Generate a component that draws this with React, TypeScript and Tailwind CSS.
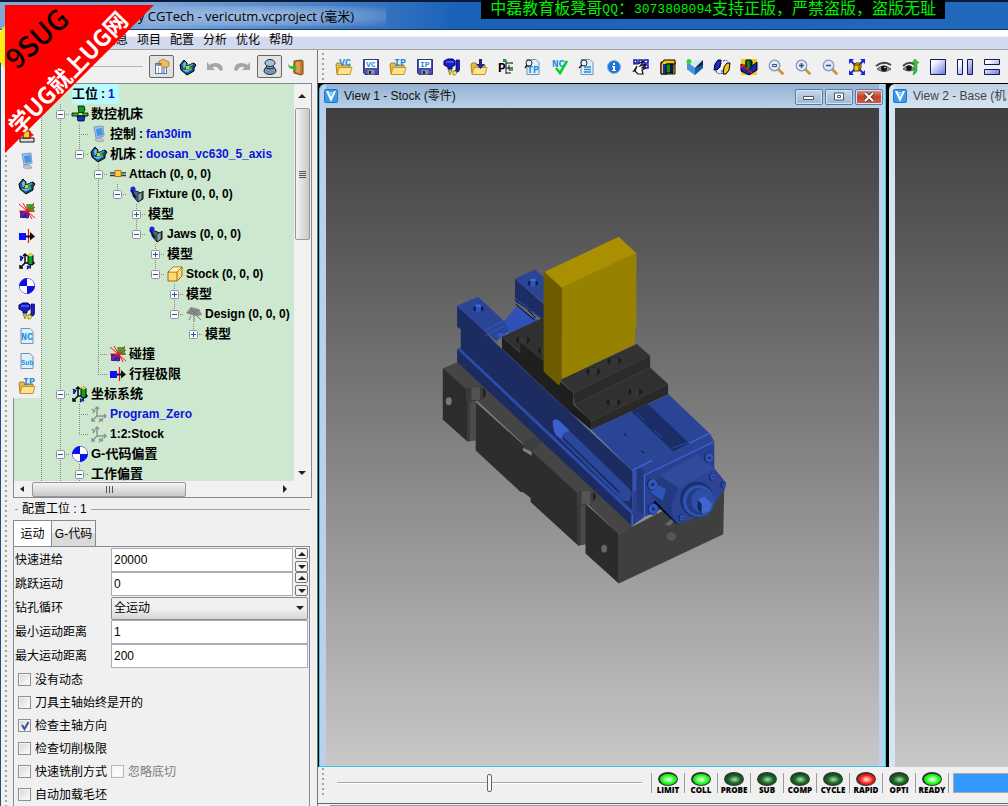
import { useState } from 'react';
import type { ReactNode } from 'react';

const folder = (
  <>
    <path d="M0 5.500 1 4h4l1 2h8v9H1z" fill="#e9b93c" stroke="#9a6d12" strokeWidth=".8" />
    <path d="M3 8.500h13l-2 7H1z" fill="#ffe38a" stroke="#b58420" strokeWidth=".8" />
  </>
);

const floppy = (
  <>
    <path d="M.5.500h15v15H2l-1.500-1.500z" fill="#4a4fae" stroke="#30347c" />
    <rect x="2" y="1" width="12" height="8" fill="#fff" />
    <rect x="4.500" y="11" width="7" height="4.500" fill="#8a90a8" />
    <rect x="6" y="12" width="2" height="3" fill="#222" />
  </>
);

const page = <path d="M2 .5h9l3 3v12H2z" fill="#dff0fd" stroke="#6f93b5" />;

const glyph = (text: string, x: number, y: number, size: number, fill = '#1b8fe0') => (
  <text x={x} y={y} fontSize={size} fontWeight="700" fill={fill} fontFamily="'Liberation Mono', monospace">
    {text}
  </text>
);

const lens = (
  <>
    <path d="m10 10 4.500 4.500" stroke="#c9963c" strokeWidth="2.800" strokeLinecap="round" />
    <circle cx="6.500" cy="6.500" r="5.300" fill="#dde8fb" stroke="#8494bb" strokeWidth="1.200" />
  </>
);

const axes = (color: string) => (
  <path
    d="M6 1v9h9M6 10l-5 5M4 3l2-2 2 2M13 8l2 2-2 2M1 12v3h3M1 3l2 2M2 7l2-3M8 13l4 2M12 12l-4 4"
    fill="none"
    stroke={color}
    strokeWidth="1.500"
  />
);

const icons: Record<string, ReactNode> = {
  properties: (
    <>
      <rect x="1.500" y="4.500" width="11" height="10" fill="#fff" stroke="#58769f" />
      <rect x="2" y="5" width="10" height="2" fill="#7aa5e0" />
      <path d="M4 9h1M7 9h4M4 11h1M7 11h4M4 13h1M7 13h4" stroke="#3d62b5" />
      <path d="M4 3 9 0l6 3v4l-4 2-3-2-4-1 4-1-3-1z" fill="#edbd62" stroke="#9a681d" strokeWidth=".7" />
    </>
  ),
  machine: (
    <>
      <path d="M0 6 4 1l3 3v3l7-3 2 2-2 3v3l-7 4-6-5z" fill="#1e5277" stroke="#000" />
      <path d="M3 5 5 3l1 3-2 3zM3 11l4 2 5-3" fill="#72bde8" stroke="#52b7ef" />
      <path d="M7 7 13 4l1 2-6 4z" fill="#4c9ac8" stroke="#000" strokeWidth=".5" />
      <path d="M6 7h3v3H6z" fill="#dccf1e" />
      <path d="M9 8h3v2H9z" fill="#0db426" />
    </>
  ),
  undo: <path d="M0 3v8h8L5.500 8.500Q10 6 13 12l3-1Q15 2 5 4.500L2.500 6z" fill="#a4a4a4" />,
  redo: <path d="M16 3v8H8l2.500-2.500Q6 6 3 12l-3-1Q1 2 11 4.500L13.500 6z" fill="#a4a4a4" />,
  stack: (
    <g fill="#7c96b4" stroke="#1d2c42" strokeWidth="1">
      <path d="M2 12q0-3 3-4h6q3 1 3 4 0 3-6 3.500-6-.5-6-3.500" />
      <path d="M5 6h6l1 3q-4 2-8 0z" />
      <ellipse cx="8" cy="4" rx="5" ry="3.500" fill="#a9bed6" />
    </g>
  ),
  exit: (
    <>
      <path d="m6 2 7-1 2 1v13l-2 1-7-2z" fill="#c07a2c" stroke="#7c4a12" />
      <path d="M8 3h4v11l-4-1z" fill="#dd9d4c" />
      <path d="M0 4q1 4 5 3V5l4 4-4 4v-3Q0 10 0 4" fill="#2fb52f" />
    </>
  ),
  openVc: <>{folder}{glyph('VC', 3, 7, 10)}</>,
  saveVc: <>{floppy}{glyph('VC', 3, 8, 8)}</>,
  openIp: <>{folder}{glyph('IP', 4, 7, 10)}</>,
  saveIp: <>{floppy}{glyph('IP', 3, 8, 8)}</>,
  tool: (
    <>
      <path d="M0 2 4 0h5l2 2v4L8 8v2H4V8L0 6z" fill="#171dc4" stroke="#00005c" />
      <path d="M2 3h8" stroke="#7a86ff" />
      <path d="M4 11h4l-2 5z" fill="#d9d23d" stroke="#5b5500" strokeWidth=".6" />
      <path d="M12 1h3.500v10L14 13H9l3-2z" fill="#171dc4" stroke="#00005c" strokeWidth=".7" />
      <path d="M9 12h3l1 2-2 2H9z" fill="#fff03a" stroke="#5b5500" strokeWidth=".6" />
    </>
  ),
  importFile: <>{folder}<path d="M8 0h3v5h3l-4.500 5L5 5h3z" fill="#15289a" /></>,
  tree: (
    <>
      {glyph('P', 0, 13, 13, '#000')}
      <path d="M8 1v14M8 4h5M8 9h5M8 14h5M11 6v5h4" stroke="#111" fill="none" />
      <path d="M5 0h3v3H5zM13 3h2v2h-2zM13 8h2v2h-2z" fill="#12a327" />
    </>
  ),
  toolPath: <>{page}{glyph('TP', 2, 14, 10)}<circle cx="4" cy="4" r="3" fill="#eef" stroke="#222" /><path d="m2 6-2 3" stroke="#222" strokeWidth="1.500" /></>,
  ncCheck: <>{glyph('NC', 0, 8, 11)}<path d="m4 9 4 5 7-12" fill="none" stroke="#00d420" strokeWidth="2.500" /></>,
  report: <>{page}<path d="M5 8h7M5 10.500h7M5 13h7" stroke="#278fdb" strokeWidth="1.500" /><circle cx="5" cy="4" r="3" fill="#eef" stroke="#222" /><path d="M3 6 0 9" stroke="#222" strokeWidth="1.500" /></>,
  info: (
    <>
      <circle cx="8" cy="8" r="6.500" fill="#1d76d2" stroke="#7eb3ea" />
      <path d="M7 4h2v2H7zM6 7h3v4h1v1H6v-1h1V8H6z" fill="#fff" />
    </>
  ),
  handGrid: (
    <>
      <path d="M1 1h3v3H1zM6 1h3v3H6zM11 1h4v3h-4zM12 6h3v3h-3zM7 6h3v3H7z" fill="#fff" stroke="#1515c8" strokeWidth="1.500" />
      <path d="m0 5 5 0 6-3-4 5 6-2-4 4 4 0-4 2 1 4H5l-3-3 2-5-4 6" fill="#fff" stroke="#111" strokeWidth="1.200" />
    </>
  ),
  blocks: (
    <>
      <path d="M1 3h14v12H1z" fill="#f1c410" stroke="#000" />
      <path d="M1 5 4 1h11v4H7v10H1z" fill="#f1c410" stroke="#000" />
      <path d="M3 5h3v10H3z" fill="#1826c4" />
      <path d="M6 5h5v9H6z" fill="#0b8e1d" stroke="#000" />
      <path d="M11 5h2v9h-2z" fill="#1826c4" stroke="#000" />
    </>
  ),
  compare: (
    <>
      <path d="m0 3 8 6 8-7v7l-8 7-8-6z" fill="#175da2" />
      <path d="m0 3 8 6v7l-8-6z" fill="#3e95d8" />
      <path d="m4 4 5 4 6-6-3-1H8z" fill="#d2e7f5" />
      <path d="m8 9 8-8v5z" fill="#0b2344" />
      <circle cx="2" cy="2.500" r="2.500" fill="#22dd36" />
    </>
  ),
  rotate: (
    <>
      <path d="m1 5 3-4h3L6 8l-3 3H0z" fill="#172acc" stroke="#000" />
      <path d="m10 8 3-4h3l-1 7-3 4H9z" fill="#f0c414" stroke="#000" />
      <path d="M9 2q5-2 5 2M2 12q1 4 6 2M7 1v4M8 11v4" fill="none" stroke="#1527d8" strokeDasharray="2 1" />
    </>
  ),
  cutPlane: (
    <>
      <path d="M0 0h16v16H0z" fill="#f5c819" />
      <path d="M0 5 5 8V2h6v5l5-4v8l-8 5-8-4z" fill="#1924c0" stroke="#000" />
      <path d="M5 1h5v8l-3 3-2-3z" fill="#087e24" stroke="#000" />
      <path d="m1 6 10 8M1 6l3 0M1 6v3" stroke="#f11" strokeWidth="1.500" />
    </>
  ),
  zoomBox: <>{lens}<path d="M4.500 5.500h4v2h-4z" fill="none" stroke="#35527d" /></>,
  zoomIn: <>{lens}<path d="M4 6.500h5M6.500 4v5" stroke="#35527d" strokeWidth="1.500" /></>,
  zoomOut: <>{lens}<path d="M4 6.500h5" stroke="#35527d" strokeWidth="1.500" /></>,
  fit: (
    <>
      <path d="m1 1 14 14M15 1 1 15" stroke="#1723df" strokeWidth="1.800" />
      <path d="M0 0h5L0 5zM16 0v5l-5-5zM0 16v-5l5 5zM16 16h-5l5-5z" fill="#1723df" />
      <path d="m5 6 2-2h5v5l-2 3H5z" fill="#f3c316" stroke="#493600" />
      <path d="M5 6h5v6M10 6l2-2" fill="none" stroke="#493600" />
    </>
  ),
  eye: (
    <>
      <path d="M0 7q7-6 15-1" fill="none" stroke="#444" strokeWidth="2" />
      <path d="M1 10q6-6 14 0-7 5-14 0" fill="#999" stroke="#555" />
      <circle cx="8" cy="9.500" r="3" fill="#111" />
      <circle cx="9" cy="8.500" r=".8" fill="#fff" />
    </>
  ),
  eyeRefresh: (
    <>
      <path d="M0 7q6-6 12-1" fill="none" stroke="#444" strokeWidth="2" />
      <path d="M0 10q5-6 12 0-6 4-12 0" fill="#999" stroke="#555" />
      <circle cx="6" cy="9" r="2.800" fill="#111" />
      <path d="m12 0 4 4h-2v7q0 3-4 5 2-6 1-12H9z" fill="#2fc53d" stroke="#188c23" strokeWidth=".5" />
    </>
  ),
  viewSingle: <path d="M.5.500h15v15H.5z" fill="url(#diag)" stroke="#111c58" />,
  viewColumns: <path d="M.5.500h5v15h-5zM10.500 .5h5v15h-5z" fill="url(#diag)" stroke="#111c58" />,
  viewRows: <path d="M.5.500h15v5H.5zM.5 10.500h15v5H.5z" fill="url(#diag)" stroke="#111c58" />,
  cnc: (
    <>
      <path d="M6 0h6l1 4-2 3H7z" fill="#0b9b20" stroke="#000" strokeWidth=".8" />
      <path d="M0 7h16v3H0z" fill="#27bb34" stroke="#000" strokeWidth=".8" />
      <path d="M5 10h8l-1 5H6z" fill="#1632cc" stroke="#000" strokeWidth=".8" />
      <path d="M7 7h3v2H7z" fill="#eee34a" />
    </>
  ),
  monitor: (
    <>
      <path d="m3 1 9-1 1 10-8 2z" fill="#9bc9f6" stroke="#8296b8" />
      <path d="m5 3 6-1 1 7-6 1z" fill="#4792e5" />
      <path d="M5 12h6l2 3-6 1-3-2z" fill="#bcc3d8" stroke="#8b91a8" strokeWidth=".6" />
    </>
  ),
  attach: (
    <>
      <path d="M0 7h16M0 9.500h16" stroke="#25373b" strokeWidth="1.300" />
      <path d="M0 8h16" stroke="#88aab0" />
      <path d="M5 4.500h6v6H5z" fill="#ffd24a" stroke="#b87000" />
    </>
  ),
  fixture: (
    <>
      <path d="m4 4 8 3 2-2v8l-5 3-5-6z" fill="#4d6a6a" stroke="#0a1515" />
      <path d="M9 8v8l4-3V6z" fill="#8a9fa0" stroke="#111" strokeWidth=".6" />
      <circle cx="4" cy="3" r="2.500" fill="#1522ea" />
      <path d="m2 4 5 8" stroke="#081088" strokeWidth="2" />
    </>
  ),
  cube: (
    <>
      <path d="m1 6 5-5h9v9l-5 5H1z" fill="#ffdb73" stroke="#9b6b12" />
      <path d="M1 6h9l5-5M10 6v9" fill="none" stroke="#9b6b12" />
      <path d="m2 5.500 4-4h8l-4 4z" fill="#fff1bd" />
    </>
  ),
  design: (
    <>
      <path d="m0 7 5-6 8 2 3 6-5 1-6-1z" fill="#8c8c8c" />
      <path d="m5 10-2 4M11 10l4 4M8 6v10M1 7l12-3M4 2l8 7" stroke="#777" />
    </>
  ),
  collision: (
    <>
      <path d="M8 1h7v8H8z" fill="#14c42e" />
      <path d="M1 8h9v7H1z" fill="#1420d4" />
      <path d="m0 1 16 14M15 0 1 15M8 1v15M0 8h16M4 0l9 16M16 4 1 12" stroke="#f31818" />
    </>
  ),
  limit: (
    <>
      <path d="M0 5h7v7H0z" fill="#0b12ff" />
      <path d="M9.500 1v14" stroke="#f01010" strokeWidth="1.200" />
      <path d="M7 7.500h4V4l5 4.500-5 4V9.500H7z" fill="#111" />
    </>
  ),
  coord: (
    <>
      {axes('#050505')}
      <path d="M9 2q3-2 5 0v9q-3 2-5 0z" fill="#0ca225" stroke="#000" />
      <ellipse cx="11.500" cy="2" rx="2.500" ry="1.300" fill="#e8d921" />
      <path d="M1 3h2v5H1zM8 13h4v2H8z" fill="#1725da" />
    </>
  ),
  axis: axes('#8b9290'),
  datum: (
    <>
      <circle cx="8" cy="8" r="7.500" fill="#fff" stroke="#0b12e8" />
      <path d="M8 8V.5A7.500 7.500 0 0 1 15.500 8zM8 8v7.500A7.500 7.500 0 0 1 .5 8z" fill="#fff" />
      <path d="M8 8V.5A7.500 7.500 0 0 0 .5 8zM8 8v7.500A7.500 7.500 0 0 0 15.500 8z" fill="#0b12e8" />
    </>
  ),
  nc: <>{page}{glyph('NC', 2, 12, 10)}</>,
  sub: <>{page}{glyph('Sub', 2, 12, 7)}</>,
  alarm: (
    <>
      <path d="M1 10h14v4H1z" fill="#ddd" stroke="#111" />
      <path d="M4 3h7v7H4z" fill="#e8d321" stroke="#111" />
      <path d="m10 3 5 4-5 3z" fill="#f11" />
    </>
  ),
};

function Icon({ name }: { name: string }) {
  return (
    <svg viewBox="0 0 16 16" className="size-4 shrink-0 overflow-visible" aria-hidden="true">
      {icons[name]}
    </svg>
  );
}

const mainTools = [
  'openVc', 'saveVc', 'openIp', 'saveIp', 'tool', 'importFile', 'tree', 'toolPath', 'ncCheck', 'report', 'info', 'handGrid',
  'blocks', 'compare', 'rotate', 'cutPlane', 'zoomBox', 'zoomIn', 'zoomOut', 'fit', 'eye', 'eyeRefresh', 'viewSingle',
  'viewColumns', 'viewRows',
];

const sideTools = ['alarm', 'monitor', 'machine', 'collision', 'limit', 'coord', 'datum', 'tool', 'nc', 'sub', 'openIp'];

// guides: "|" line, "T" branch, "L" last branch, "." blank. The last cell may carry an expander.
type Row = { guides: string; open?: boolean; icon?: string; cjk?: string; value?: string; blue?: boolean; selected?: boolean };

const rows: Row[] = [
  { guides: '|.', cjk: '工位', value: '1', blue: true, selected: true },
  { guides: '|T', open: true, icon: 'cnc', cjk: '数控机床' },
  { guides: '||T', icon: 'monitor', cjk: '控制', value: 'fan30im', blue: true },
  { guides: '||L', open: true, icon: 'machine', cjk: '机床', value: 'doosan_vc630_5_axis', blue: true },
  { guides: '||.T', open: true, icon: 'attach', value: 'Attach (0, 0, 0)' },
  { guides: '||.|L', open: true, icon: 'fixture', value: 'Fixture (0, 0, 0)' },
  { guides: '||.|.T', open: false, cjk: '模型' },
  { guides: '||.|.L', open: true, icon: 'fixture', value: 'Jaws (0, 0, 0)' },
  { guides: '||.|..T', open: false, cjk: '模型' },
  { guides: '||.|..L', open: true, icon: 'cube', value: 'Stock (0, 0, 0)' },
  { guides: '||.|...T', open: false, cjk: '模型' },
  { guides: '||.|...L', open: true, icon: 'design', value: 'Design (0, 0, 0)' },
  { guides: '||.|....L', open: false, cjk: '模型' },
  { guides: '||.T', icon: 'collision', cjk: '碰撞' },
  { guides: '||.L', icon: 'limit', cjk: '行程极限' },
  { guides: '|T', open: true, icon: 'coord', cjk: '坐标系统' },
  { guides: '||T', icon: 'axis', value: 'Program_Zero', blue: true },
  { guides: '||L', icon: 'axis', value: '1:2:Stock' },
  { guides: '|T', open: true, icon: 'datum', cjk: 'G-代码偏置' },
  { guides: '||T', open: true, cjk: '工作偏置' },
];

function Guide({ kind, open }: { kind: string; open?: boolean }) {
  return (
    <svg viewBox="0 0 19 20" className="h-5 w-[19px] shrink-0" aria-hidden="true">
      <g stroke="#7c8c7e" strokeDasharray="1 1" fill="none">
        {kind !== '.' && <path d={kind === 'L' ? 'M9.500 0v10' : 'M9.500 0v20'} />}
        {(kind === 'T' || kind === 'L') && <path d="M9 10.500h10" />}
      </g>
      {open !== undefined && (
        <>
          <rect x="5.500" y="6.500" width="8" height="8" rx="1" fill="#fbfbfb" stroke="#8d939d" />
          <path d={open ? 'M7 10.500h5' : 'M7 10.500h5M9.500 8v5'} stroke="#2f4fa0" />
        </>
      )}
    </svg>
  );
}

function TreeRow({ row }: { row: Row }) {
  return (
    <li className="flex h-5 items-center whitespace-nowrap text-xs font-bold">
      {row.guides.split('').map((kind, i) => (
        <Guide key={i} kind={kind} open={i === row.guides.length - 1 ? row.open : undefined} />
      ))}
      {row.icon && (
        <span className="flex w-[19px] shrink-0 justify-center">
          <Icon name={row.icon} />
        </span>
      )}
      <span className={`ml-0.5 flex h-5 items-center ${row.selected ? 'bg-[#b8fbff] pr-1' : ''}`}>
        {row.cjk && <span className="text-[13px] leading-5">{row.cjk}</span>}
        {row.cjk && row.value && <span className="px-[3px]">:</span>}
        {row.value && <span className={row.blue ? 'text-[#0a14e0]' : ''}>{row.value}</span>}
      </span>
    </li>
  );
}

function Grip() {
  return <div className="w-[3px] shrink-0 self-stretch bg-[radial-gradient(circle_at_1px_1px,#a4a4a4_1px,transparent_1px)] bg-[length:3px_5px]" />;
}

function Arrow({ d }: { d: string }) {
  return (
    <svg viewBox="0 0 8 8" className="size-2" aria-hidden="true">
      <path d={d} fill="#222" />
    </svg>
  );
}

function Tree() {
  return (
    <div className="relative flex min-h-0 flex-1 flex-col border border-[#858a94] bg-[#cde8cf]">
      <div className="flex min-h-0 flex-1">
        <ul className="min-w-0 flex-1 overflow-hidden pl-[18px]">
          {rows.map((row, i) => (
            <TreeRow key={i} row={row} />
          ))}
        </ul>
        <div className="flex w-[17px] flex-col items-center bg-[#f1f1f1] pr-px pb-1">
          <div className="flex h-6 items-center"><Arrow d="m0 6 4-4 4 4z" /></div>
          <div className="flex h-[132px] w-[15px] flex-col items-center justify-center gap-px rounded-xs border border-[#979797] bg-linear-to-r from-[#f4f4f4] to-[#c8c8c8]">
            <i className="h-px w-[7px] bg-[#555]" />
            <i className="h-px w-[7px] bg-[#555]" />
            <i className="h-px w-[7px] bg-[#555]" />
            <i className="h-px w-[7px] bg-[#555]" />
          </div>
          <div className="mt-auto"><Arrow d="m0 2 4 4 4-4z" /></div>
        </div>
      </div>
      <div className="flex h-4 items-center bg-[#f1f1f1] pl-1 pr-[22px]">
        <Arrow d="M6 1 2 4l4 3z" />
        <div className="ml-1.5 flex h-[15px] w-[154px] items-center justify-center gap-0.5 rounded-xs border border-[#979797] bg-linear-to-b from-[#f4f4f4] to-[#c8c8c8]">
          <i className="h-[7px] w-px bg-[#555]" />
          <i className="h-[7px] w-px bg-[#555]" />
          <i className="h-[7px] w-px bg-[#555]" />
        </div>
        <div className="ml-auto"><Arrow d="m2 0 4 4-4 4z" /></div>
      </div>
      {/* Shortcut strip sits over the tree's left margin */}
      <nav className="absolute -left-px -top-px flex w-7 flex-col items-center bg-[#f0f0f0] pt-10">
        {sideTools.map((name) => (
          <button key={name} aria-label={name} className="flex h-[25px] items-center">
            <Icon name={name} />
          </button>
        ))}
      </nav>
    </div>
  );
}

function NumberField({ id, label, value, spin = false }: { id: string; label: string; value: string; spin?: boolean }) {
  return (
    <div className="flex h-6 items-center">
      <label htmlFor={id} className="w-24 shrink-0">{label}</label>
      <input id={id} defaultValue={value} className="h-6 min-w-0 flex-1 border border-[#abadb3] bg-white px-0.5 text-xs outline-none" />
      {spin && (
        <div className="flex w-[15px] flex-col items-end gap-0.5">
          <button aria-label="+" className="flex h-[11px] w-[13px] items-center justify-center rounded-xs border border-[#777] bg-[#f4f4f4]">
            <Arrow d="m0 6 4-4 4 4z" />
          </button>
          <button aria-label="-" className="flex h-[11px] w-[13px] items-center justify-center rounded-xs border border-[#777] bg-[#f4f4f4]">
            <Arrow d="m0 2 4 4 4-4z" />
          </button>
        </div>
      )}
    </div>
  );
}

function Check({ label, checked = false, disabled = false }: { label: string; checked?: boolean; disabled?: boolean }) {
  return (
    <label className={`flex items-center gap-1 ${disabled ? 'text-[#7d7d7d]' : ''}`}>
      <span className="grid place-items-center">
        <input
          type="checkbox"
          defaultChecked={checked}
          disabled={disabled}
          className="peer size-[13px] appearance-none border border-[#8e8f8f] bg-linear-to-br from-[#d3d6da] to-white shadow-[inset_0_0_0_1px_#f4f4f4] [grid-area:1/1] disabled:border-[#b8b8b8] disabled:from-[#f6f6f6]"
        />
        <svg viewBox="0 0 10 10" className="pointer-events-none hidden size-2.5 [grid-area:1/1] peer-checked:block">
          <path d="m2 4 2.500 4L8.500 1" fill="none" stroke="#3a4f9f" strokeWidth="2" />
        </svg>
      </span>
      {label}
    </label>
  );
}

function Settings() {
  const [tab, setTab] = useState('运动');

  return (
    <section className="shrink-0 pr-0.5 text-xs">
      <div className="flex h-[22px] items-center gap-1 pl-0.5">
        <span className="h-px w-[3px] bg-[#a0a0a0]" />
        <h2>配置工位 : 1</h2>
        <span className="h-px flex-1 bg-[#a0a0a0]" />
      </div>
      <div className="flex h-[26px]">
        {['运动', 'G-代码'].map((name) => (
          <button
            key={name}
            onClick={() => setTab(name)}
            className={`border border-b-0 border-[#858a94] ${
              tab === name ? 'w-[39px] bg-white' : '-ml-px w-[45px] bg-linear-to-b from-[#f0f0f0] from-50% to-[#dadada] to-50%'
            }`}
          >
            {name}
          </button>
        ))}
      </div>
      <div className="border border-b-0 border-[#858a94] px-px pt-px">
        <NumberField id="rapid" label="快速进给" value="20000" spin />
        <NumberField id="skip" label="跳跃运动" value="0" spin />
        <div className="flex h-6 items-center">
          <label htmlFor="drill" className="w-24 shrink-0">钻孔循环</label>
          <div className="grid flex-1 items-center">
            <select id="drill" className="h-[23px] w-full appearance-none rounded-xs border border-[#8a8a8a] bg-linear-to-b from-[#f0f0f0] from-50% to-[#d6d6d6] px-0.5 outline-none [grid-area:1/1]">
              <option>全运动</option>
            </select>
            <span className="pointer-events-none mr-1 justify-self-end [grid-area:1/1]"><Arrow d="m0 2 4 4 4-4z" /></span>
          </div>
        </div>
        <NumberField id="min" label="最小运动距离" value="1" />
        <NumberField id="max" label="最大运动距离" value="200" />
        <div className="flex flex-col pl-[3px] [&>div]:flex [&>div]:h-[23px] [&>div]:items-center [&>div]:gap-1">
          <div><Check label="没有动态" /></div>
          <div><Check label="刀具主轴始终是开的" /></div>
          <div><Check label="检查主轴方向" checked /></div>
          <div><Check label="检查切削极限" /></div>
          <div>
            <Check label="快速铣削方式" />
            <Check label="忽略底切" disabled />
          </div>
          <div><Check label="自动加载毛坯" /></div>
        </div>
      </div>
    </section>
  );
}

function Bolt({ x, y, r = 12 }: { x: number; y: number; r?: number }) {
  return (
    <g>
      <ellipse cx={x} cy={y} rx={r} ry={r + 2} fill="#182a66" />
      <ellipse cx={x + 2} cy={y} rx={r - 2} ry={r} fill="#3154bd" />
      <ellipse cx={x + 2} cy={y} rx={r / 3} ry={r / 3} fill="#1d3274" />
    </g>
  );
}

function Bore({ x, y }: { x: number; y: number }) {
  return (
    <g>
      <ellipse cx={x} cy={y} rx="21" ry="12" fill="#1a1a1a" />
      <path d={`M${x - 12} ${y - 11}h24v20q-12 10-24 0z`} fill="#353535" />
    </g>
  );
}

function TowerHole({ x, y }: { x: number; y: number }) {
  return (
    <g>
      <ellipse cx={x} cy={y} rx="16" ry="9" fill="#101b40" />
      <path d={`M${x - 8} ${y - 10}h16v18q-8 7-16 0z`} fill="#2f51b8" />
      <ellipse cx={x} cy={y - 9} rx="9" ry="4" fill="#4069e0" />
    </g>
  );
}

function ViseModel() {
  return (
    <svg viewBox="326 108 554 657" className="size-full" role="img" aria-label="Stock">
      <g transform="translate(430 220) scale(.33333)">
        {/* base plate */}
        <path d="M39 443 85 424 612 917 740 850 885 800 568 940z" fill="#454545" />
        <path d="M39 443 112 508V662L39 597z" fill="#2c2c2c" />
        <path d="M112 540h26v120l-26 3z" fill="#4b4b4b" />
        <path d="M112 540h8v121l-8 2z" fill="#3a3a3a" />
        <path d="M138 545 280 672v18l26 16v-14L445 820v155L303 845v-12l-23-18h-7L138 690z" fill="#2d2d2d" />
        <path d="m280 666 47-24 16 18-37 34-26-12z" fill="#3e3e3e" />
        <path d="M445 840h26v132l-26 4z" fill="#4a4a4a" />
        <path d="M445 840h9v134l-9 2z" fill="#3a3a3a" />
        <path d="M468 850 568 940v150L468 1000z" fill="#2b2b2b" />
        <path d="M568 940 885 790 882 942 568 1090z" fill="#3f3f3f" />
        <path d="M108 505q30-14 58 0v26q-28 16-58 10z" fill="#3a3a3a" />
        <path d="M125 500h26v38h-26z" fill="#525252" />
        <path d="m160 504 8 6v16l-8 6z" fill="#222" />
        <path d="M442 817q28-14 56 0v22q-24 18-56 16z" fill="#3c3c3c" />
        <path d="M456 812h27v38h-27z" fill="#555" />
        <path d="m491 816 8 6v10l-8 8z" fill="#222" />
        <ellipse cx="57" cy="542" rx="9" ry="12" fill="#777" />
        <ellipse cx="524" cy="985" rx="9" ry="12" fill="#666" />
        <ellipse cx="726" cy="948" rx="14" ry="13" fill="#555" />
        <path d="m706 912 24-18 6 6-14 16z" fill="#666" />
        {/* fixed towers */}
        <path d="m222 303 40-48 80 55-100 40z" fill="#3051b5" />
        <path d="M256 174 345 252v50l-45-32-44-28z" fill="#1c2d66" />
        <path d="m256 174 60-28 30 26v78z" fill="#2b4596" />
        <path d="m258 250 56 48M294 266l24 26" stroke="#05070f" strokeWidth="3" />
        <path d="m256 232 86 66" stroke="#2c4baa" strokeWidth="3" />
        <path d="M82 255 165 330 195 365 608 750V917L82 424v-39l11-2v-57l-11-8z" fill="#1c2c61" />
        <path d="m82 255 63-27 77 72 16 30-38 32-35-32z" fill="#2b4596" />
        <path d="m165 330 57-30M165 346l60-30" stroke="#3a61d2" strokeWidth="2" />
        <path d="m82 385 11 0L612 873l-4 10z" fill="#2d4dad" />
        <path d="m82 255 83 75 30 35 413 385" stroke="#2f50b4" strokeWidth="2" fill="none" />
        <TowerHole x={310} y={187} />
        <TowerHole x={146} y={264} />
        <ellipse cx="214" cy="344" rx="12" ry="8" fill="#3155c4" />
        {/* bed and end cap */}
        <path d="M370 600q8-6 18 0l205 198q14 12 13 25l-6 20q-12 2-24-5L380 645q-12-18-10-45z" fill="#2b4799" />
        <path d="M370 600q8-6 18 0l32 30q-24 8-24 24l-16-9q-12-18-10-45z" fill="#3a60cf" />
        <path d="m400 652 170 164" stroke="#152557" strokeWidth="4" />
        <path d="m485 628 233-106 124 118 13 23-210 102-37-15z" fill="#2b4596" />
        <path d="m605 573 50-23 125 118-48 24z" fill="#1b2d66" />
        <path d="m620 577 24 22M675 630l24 20M730 682l52-18" stroke="#355bc7" strokeWidth="2" />
        <path d="m583 638 8 8M636 690l8 8" stroke="#000" strokeWidth="3" />
        <path d="M608 750 642 766 855 663v130L645 890l-37 27z" fill="#2a408e" />
        <path d="m608 750 60-30M642 766l213-103M780 668l62-30M645 766v124M608 882v35" stroke="#3c64dc" strokeWidth="4" fill="none" />
        <path d="M611 752h10v60h-10z" fill="#3154ba" />
        <path d="M622 745h20v140l-20-15z" fill="#223879" />
        <path d="m676 840 74 72-8 0-70-66z" fill="#050813" />
        <path d="m665 820 25-55 115-64 52 45 34 42-6 22-55 70-85 32-35-40z" fill="#2c4493" />
        <path d="m690 765 58 38-28 65 25 44-58-62-22-30z" fill="#233a80" />
        <path d="m690 765 115-64 52 45-109 57z" fill="#304a9c" />
        <path d="m668 788 42 18-10 34-34-22z" fill="#3054b9" />
        <ellipse cx="803" cy="838" rx="51" ry="54" fill="#1c3172" />
        <ellipse cx="808" cy="842" rx="47" ry="48" fill="#3052b3" />
        <ellipse cx="809" cy="843" rx="38" ry="40" fill="#243b82" />
        <ellipse cx="820" cy="842" rx="34" ry="36" fill="#2e4ea6" />
        <path d="m805 838 20-10 24 22-8 22-22 8-12-20z" fill="#4166cf" />
        <path d="m805 838 12 12v30l-12-14z" fill="#13265e" />
        <Bolt x={668} y={792} r={16} />
        <Bolt x={838} y={712} r={14} />
        <Bolt x={670} y={866} r={16} />
        <Bolt x={756} y={893} r={9} />
        <Bolt x={848} y={770} r={9} />
        <Bolt x={881} y={794} r={8} />
        <Bolt x={727} y={867} r={6} />
        {/* jaws */}
        <path d="m217 348 130-60v170l-62-52z" fill="#303030" />
        <path d="M217 348 273 398v-34l80 85 79 68v36l53 50v25L415 570 217 384z" fill="#1f1f1f" />
        <Bore x={280} y={358} />
        <Bore x={346} y={390} />
        <path d="m273 366 70 58v32l-70-60z" fill="#1f1f1f" />
        <path d="m390 478 232-108 40 35-230 112z" fill="#333" />
        <path d="m432 517 230-112v36L435 553z" fill="#2b2b2b" />
        <path d="m435 553 227-112 54 49-231 113z" fill="#303030" />
        <path d="m485 603 231-113v32L485 628z" fill="#292929" />
        <path d="m432 553 53 50v25l-60-52z" fill="#1c1c1c" />
        <Bore x={491} y={453} />
        <Bore x={555} y={421} />
        <Bore x={552} y={545} />
        <Bore x={617} y={514} />
        {/* stock block */}
        <path d="M342 153 397 202V475l-9 20-46-42z" fill="#6e5d00" />
        <path d="M345 153 568 48l53 49-224 105z" fill="#aa9000" />
        <path d="M397 202 621 97v225l-4 2v46L397 475z" fill="#978100" />
      </g>
    </svg>
  );
}

function ViewLogo() {
  return (
    <svg viewBox="0 0 14 14" className="size-3.5 shrink-0" aria-hidden="true">
      <rect x=".5" y=".5" width="13" height="13" rx="1" fill="#3c9be8" stroke="#1978c9" />
      <path d="M2 2h2.500L7 8l3-6h2L7 13z" fill="#fff" />
      <path d="M5 3h4L7 7z" fill="#8fd0ff" />
    </svg>
  );
}

const leds = [
  ['LIMIT', 'on'], ['COLL', 'on'], ['PROBE', 'off'], ['SUB', 'off'], ['COMP', 'off'],
  ['CYCLE', 'off'], ['RAPID', 'alarm'], ['OPTI', 'off'], ['READY', 'on'],
];

const ledColor: Record<string, string> = {
  on: 'from-[#d8ffd8] via-[#1cff1c] to-[#00d800]',
  off: 'from-[#b5d8b5] via-[#0e6a1c] to-[#064d10]',
  alarm: 'from-[#ffd8d8] via-[#ff1c1c] to-[#e80000]',
};

function StatusBar() {
  return (
    <footer className="shrink-0 bg-[#f0f0f0]">
      <div className="flex h-8 items-center pl-1">
        <div className="flex h-[30px]"><Grip /></div>
        <div className="flex min-w-0 flex-1 items-center pl-3 pr-[9px]">
          <input
            type="range"
            defaultValue={50}
            aria-label="Speed"
            className="h-5 w-full appearance-none bg-transparent [&::-webkit-slider-runnable-track]:h-0.5 [&::-webkit-slider-runnable-track]:border-t [&::-webkit-slider-runnable-track]:border-b [&::-webkit-slider-runnable-track]:border-t-[#a8a8a8] [&::-webkit-slider-runnable-track]:border-b-white [&::-webkit-slider-thumb]:-mt-[9px] [&::-webkit-slider-thumb]:h-[18px] [&::-webkit-slider-thumb]:w-[5px] [&::-webkit-slider-thumb]:appearance-none [&::-webkit-slider-thumb]:rounded-xs [&::-webkit-slider-thumb]:border [&::-webkit-slider-thumb]:border-[#666] [&::-webkit-slider-thumb]:bg-[#f6f6f6]"
          />
        </div>
        {leds.map(([name, state]) => (
          <div key={name} className="flex h-5 w-[33px] shrink-0 flex-col items-center justify-center border-l border-[#9a9a9a]">
            <span className={`h-3.5 w-5 shrink-0 rounded-[50%] border border-t-2 border-l-2 border-[#333] bg-radial ${ledColor[state]}`} />
            <span className="font-['Open_Sans',sans-serif] text-[8px] leading-2 font-extrabold text-black">{name}</span>
          </div>
        ))}
        <div className="h-5 border-l border-[#9a9a9a]" />
        <div className="ml-1 h-5 w-[55px] shrink-0 border border-r-0 border-[#aaa] bg-[#3399ff]" />
      </div>
      <div className="mt-1 border-t border-[#666] bg-[#f0f0f0] pb-px" />
      <div className="ml-3 h-px bg-[#9a9a9a]" />
    </footer>
  );
}

function Views() {
  const caption = 'flex h-4 w-7 items-center justify-center rounded-xs border border-[#5d7ba0] shadow-[inset_0_0_0_1px_#d5e3f2]';

  return (
    <main className="flex min-h-0 flex-1 overflow-hidden bg-black pl-px pt-px">
      <section className="flex min-w-0 flex-1 flex-col rounded-tl-md border border-t-0 border-[#35c7ea] bg-[#b9d1ea] px-1.5">
        <header className="flex h-6 shrink-0 items-center bg-linear-to-b from-[#95b2d0] to-[#b9d1ea] text-xs">
          <span className="-ml-0.5 mr-1.5"><ViewLogo /></span>
          <h2 className="flex-1 text-[#111]">View 1 - Stock (零件)</h2>
          <div className="-mr-1 flex gap-0.5 self-end pb-[3px]">
            <button aria-label="Minimize" className={`${caption} bg-linear-to-b from-[#c5d7ea] to-[#9fb9d5]`}>
              <svg viewBox="0 0 12 8" className="h-2 w-3"><path d="M.5 3.500h10v3H.5z" fill="#fff" stroke="#47566b" /></svg>
            </button>
            <button aria-label="Maximize" className={`${caption} bg-linear-to-b from-[#c5d7ea] to-[#9fb9d5]`}>
              <svg viewBox="0 0 12 10" className="h-2.5 w-3"><path d="M1.500 1h9v7h-9zM4.500 3.500h3v2h-3z" fill="#fff" stroke="#47566b" /></svg>
            </button>
            <button aria-label="Close" className={`${caption} bg-linear-to-b from-[#df9284] via-[#c2412d] to-[#d1624b]`}>
              <svg viewBox="0 0 12 10" className="h-2.5 w-3"><path d="m2 1 8 8M10 1 2 9" stroke="#5b2a28" strokeWidth="4" /><path d="m2 1 8 8M10 1 2 9" stroke="#fff" strokeWidth="2.200" /></svg>
            </button>
          </div>
        </header>
        <div className="min-h-0 flex-1 bg-linear-to-b from-[#3f3f3f] to-[#c8c8c8]">
          <ViseModel />
        </div>
      </section>
      <section className="ml-[3px] flex w-[119px] shrink-0 flex-col rounded-tl-md bg-[#d7e4f2] pl-1.5">
        <header className="flex h-6 shrink-0 items-center bg-linear-to-b from-[#bfd0e3] to-[#d7e4f2] text-xs whitespace-nowrap">
          <span className="-ml-0.5 mr-1.5"><ViewLogo /></span>
          <h2 className="text-[#444]">View 2 - Base (机</h2>
        </header>
        <div className="min-h-0 flex-1 bg-linear-to-b from-[#3f3f3f] to-[#c8c8c8]" />
      </section>
    </main>
  );
}

function Watermark() {
  return (
    <>
      <svg viewBox="0 0 160 160" className="pointer-events-none absolute left-0 top-0 size-40">
        <circle cx="26" cy="47" r="30" fill="#f7ee19" />
        <path d="M5 5h149L5 153z" fill="#f00" />
        <g fontFamily="'Noto Sans CJK SC', sans-serif" textAnchor="middle">
          <text transform="translate(44 46) rotate(-42)" fontSize="28" fontWeight="500">9SUG</text>
          <text transform="translate(74 79) rotate(-46)" fontSize="23" fontWeight="700" fill="#fff">学UG就上UG网</text>
        </g>
      </svg>
      <p className="absolute right-[63px] top-0 flex h-[19px] items-center bg-black px-[9px] font-['Liberation_Mono','Noto_Sans_CJK_SC',monospace] text-[13px] leading-4 whitespace-nowrap text-[#00f000]">
        <span className="text-base leading-4">中磊教育板凳哥</span>
        <span>QQ</span>
        <span className="text-base leading-4">：</span>
        <span>3073808094</span>
        <span className="text-base leading-4">支持正版，严禁盗版，盗版无耻</span>
      </p>
    </>
  );
}

export default function App() {
  return (
    <div className="relative flex h-screen flex-col overflow-hidden bg-[#f0f0f0] font-['Liberation_Sans','Noto_Sans_CJK_SC',sans-serif] text-xs text-black">
      <svg className="absolute size-0" aria-hidden="true">
        <linearGradient id="diag" x1="0" y1="0" x2="1" y2="1">
          <stop offset=".2" stopColor="#fff" />
          <stop offset="1" stopColor="#6d72e0" />
        </linearGradient>
      </svg>
      <header className="flex h-[30px] shrink-0 items-center border-t-2 border-b border-t-[#0b1a35] border-b-[#12386f] bg-linear-to-r from-[#7fa6d8] from-15% via-[#1a62b8] via-45% to-[#2069bd] pl-[130px]">
        <h1 className="bg-radial from-[#b4cce9]/80 to-transparent pr-8 font-['Open_Sans','Noto_Sans_CJK_SC',sans-serif] text-[13px] leading-5">
          by CGTech - vericutm.vcproject (毫米)
        </h1>
      </header>
      <nav className="flex h-5 shrink-0 items-center gap-[9px] border-b border-[#a5a5a5] bg-linear-to-b from-white from-30% to-[#d4daed] to-40% pl-[104px]">
        {['信息', '项目', '配置', '分析', '优化', '帮助'].map((item) => (
          <button key={item}>{item}</button>
        ))}
      </nav>
      <div className="flex min-h-0 flex-1 border-l border-[#1d4c86]">
        <aside className="flex w-[317px] shrink-0 border-r border-[#777] pl-1">
          <Grip />
          <div className="ml-[5px] mr-[5px] flex min-w-0 flex-1 flex-col">
            <div className="flex h-[33px] shrink-0 items-center">
              <span className="mr-1.5 h-px flex-1 bg-[#b4b4b4]" />
              <button aria-label="Properties" className="flex h-[23px] w-[25px] items-center justify-center rounded-xs border border-[#666] bg-[#e2e2e2]">
                <Icon name="properties" />
              </button>
              {['machine', 'undo', 'redo'].map((name) => (
                <button key={name} aria-label={name} className="flex w-[27px] justify-center"><Icon name={name} /></button>
              ))}
              <button aria-label="Stack" className="ml-0.5 flex h-[23px] w-[25px] items-center justify-center rounded-xs border border-[#666] bg-[#e2e2e2]">
                <Icon name="stack" />
              </button>
              <button aria-label="Exit" className="mr-[3px] flex w-[27px] justify-center"><Icon name="exit" /></button>
            </div>
            <Tree />
            <Settings />
          </div>
        </aside>
        <div className="flex min-w-0 flex-1 flex-col">
          <div className="flex h-[33px] shrink-0 items-center pl-1">
            <div className="mr-[5px] flex h-7"><Grip /></div>
            {mainTools.map((name) => (
              <button key={name} aria-label={name} className="flex w-[27px] shrink-0 justify-center"><Icon name={name} /></button>
            ))}
          </div>
          <Views />
          <StatusBar />
        </div>
      </div>
      <Watermark />
    </div>
  );
}
